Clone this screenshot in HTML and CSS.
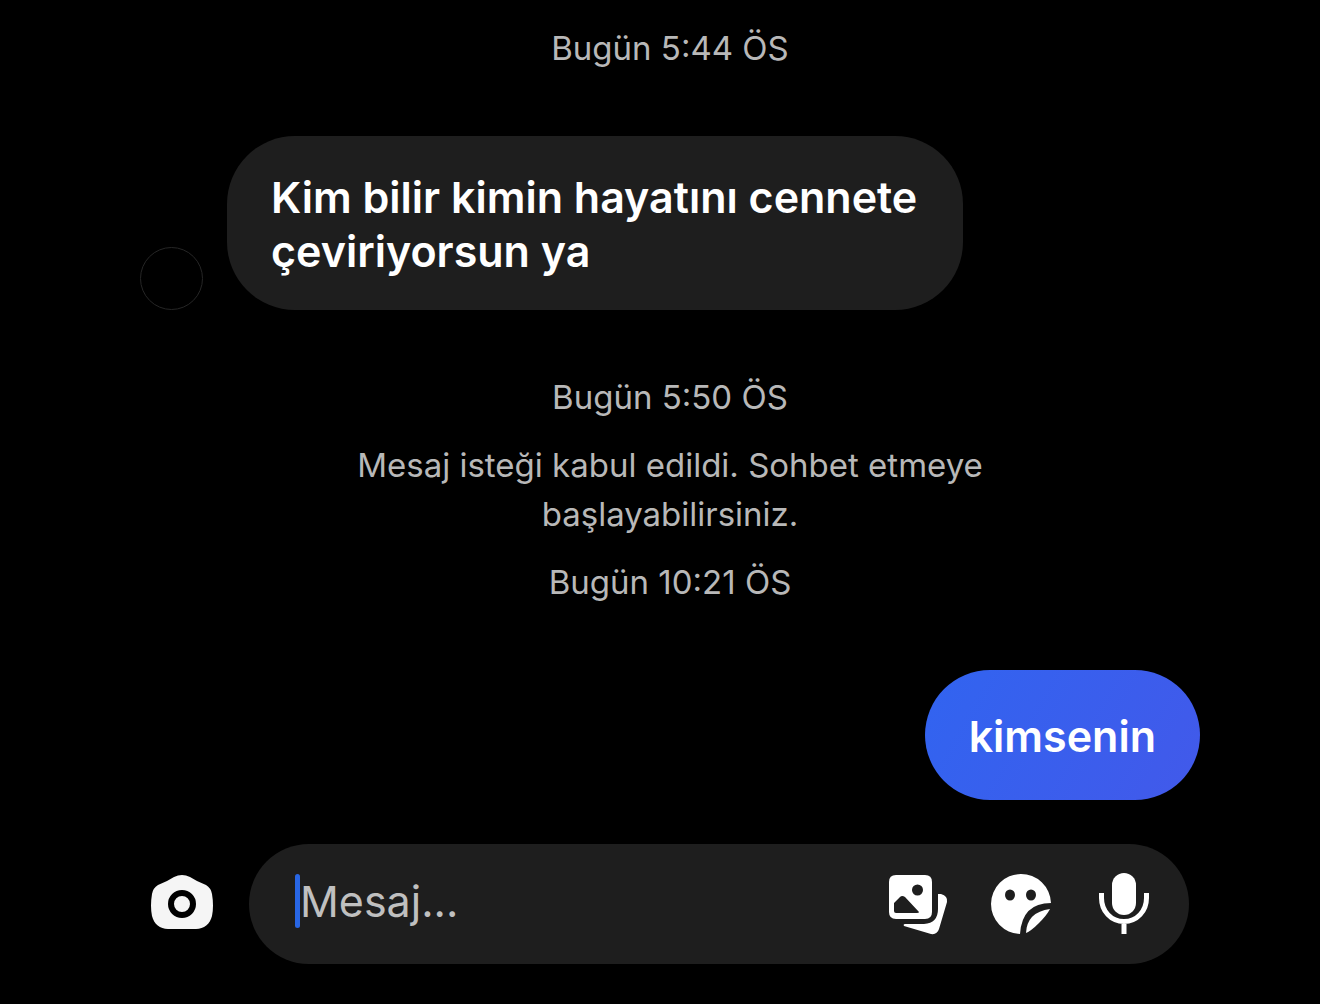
FILE: index.html
```html
<!DOCTYPE html>
<html lang="tr">
<head>
<meta charset="utf-8">
<meta name="viewport" content="width=device-width, initial-scale=1">
<title>Mesajlar</title>
<link rel="stylesheet" href="styles.css">
</head>
<body>
<main class="chat">
  <section class="thread">
    <div class="notices">
      <time class="notice">Bugün 5:44 ÖS</time>
    </div>
    <div class="row">
      <span class="avatar"></span>
      <p class="bubble">Kim bilir kimin hayatını cennete çeviriyorsun ya</p>
    </div>
    <div class="notices">
      <time class="notice">Bugün 5:50 ÖS</time>
      <p class="notice">Mesaj isteği kabul edildi. Sohbet etmeye başlayabilirsiniz.</p>
      <time class="notice">Bugün 10:21 ÖS</time>
    </div>
    <div class="row row-sent">
      <p class="bubble bubble-sent">kimsenin</p>
    </div>
  </section>
  <form class="composer">
    <button class="icon-button" type="button" aria-label="Kamera">
      <svg width="64" height="60" viewBox="0 0 64 60">
        <path fill="#f5f5f5" d="M24 3Q32 -1 40 3L47 7L56 11Q61 14 62 20Q64 32 62 42C60 50 54 55 46 55H18C10 55 4 50 2 42Q0 32 2 20Q3 14 8 11L17 7Z"/>
        <circle cx="32" cy="30" r="11" fill="none" stroke="#000" stroke-width="6"/>
      </svg>
    </button>
    <div class="field">
      <div class="entry">
        <span class="caret"></span>
        <input class="input" type="text" placeholder="Mesaj..." aria-label="Mesaj">
      </div>
      <div class="tools">
        <button class="icon-button" type="button" aria-label="Galeri">
          <svg width="60" height="62" viewBox="0 0 60 62">
            <path fill="#fff" fill-rule="evenodd" d="M8 2H37Q44 2 44 9V39Q44 46 37 46H8Q1 46 1 39V9Q1 2 8 2ZM29.500 11.500A5.500 5.500 0 1 0 29.500 22.500A5.500 5.500 0 1 0 29.500 11.500ZM12 24Q14 22 17 24L31 39Q31 40 29 40H8Q6 40 6 38V30Z"/>
            <path fill="#fff" d="M50 21H53Q60 23 59 29L51 56Q49 62 43 61L16 53Q15 51 17 51H36Q50 50 50 36Z"/>
          </svg>
        </button>
        <button class="icon-button" type="button" aria-label="Çıkartma">
          <svg width="60" height="62" viewBox="0 0 60 62">
            <path fill="#fff" d="M29 61A30 30 0 1 1 60 30Q31 30 29 61Z"/>
            <ellipse cx="19" cy="22" rx="5" ry="5.500" fill="#1e1e1e"/>
            <ellipse cx="40" cy="22" rx="5" ry="5.500" fill="#1e1e1e"/>
            <path fill="#fff" d="M35 60Q36 39 59 36Q56 42 48 50Q40 58 35 60Z"/>
          </svg>
        </button>
        <button class="icon-button" type="button" aria-label="Sesli mesaj">
          <svg width="60" height="62" viewBox="0 0 60 62">
            <rect x="18" y="0" width="24" height="42" rx="12" fill="#fff"/>
            <path fill="none" stroke="#fff" stroke-width="5" d="M7.500 20V25C7.500 38 17 48.500 30 48.500S52.500 38 52.500 25V20M30 48V61"/>
          </svg>
        </button>
      </div>
    </div>
  </form>
</main>
</body>
</html>
```

FILE: styles.css
```css
* {
  box-sizing: border-box;
}

body {
  margin: 0;
  background: #000;
  color: #fff;
  font-family: Inter, "Liberation Sans", sans-serif;
}

p {
  margin: 0;
}

.chat {
  display: flex;
  flex-direction: column;
  gap: 44px;
  min-height: 100vh;
  padding: 24px 120px 40px 140px;
}

.thread {
  display: flex;
  flex-direction: column;
  gap: 63px;
}

.notices {
  display: flex;
  flex-direction: column;
  align-items: center;
  gap: 19px;
}

.notice {
  max-width: 680px;
  color: #b8b8b8;
  font-size: 33px;
  line-height: 49px;
  text-align: center;
}

.row {
  display: flex;
  align-items: flex-end;
  gap: 24px;
}

.row-sent {
  justify-content: flex-end;
}

.avatar {
  flex: none;
  width: 63px;
  height: 63px;
  border: 1px solid #262626;
  border-radius: 50%;
}

.bubble {
  max-width: 736px;
  padding: 34px 44px 32px;
  border-radius: 68px;
  background: #1e1e1e;
  font-size: 43px;
  font-weight: 600;
  line-height: 54px;
}

.bubble-sent {
  padding: 39px 44px 37px;
  background: linear-gradient(120deg, #3164f0, #4259ea);
}

.composer {
  display: flex;
  align-items: center;
  gap: 35px;
  padding: 0 11px 0 10px;
}

.icon-button {
  flex: none;
  padding: 0;
  border: 0;
  background: none;
}

.icon-button svg {
  display: block;
}

.field {
  display: flex;
  flex: 1;
  align-items: center;
  min-width: 0;
  height: 120px;
  padding: 0 35px 0 46px;
  border-radius: 60px;
  background: #1e1e1e;
}

.entry {
  display: flex;
  flex: 1;
  align-items: center;
  min-width: 0;
  padding-bottom: 6px;
}

.caret {
  flex: none;
  width: 5px;
  height: 54px;
  border-radius: 3px;
  background: #2866e4;
}

.input {
  flex: 1;
  min-width: 0;
  height: 60px;
  padding: 0;
  border: 0;
  outline: 0;
  background: none;
  color: #fff;
  font: 400 43px Inter, "Liberation Sans", sans-serif;
}

.input::placeholder {
  color: #c0c0c0;
}

.tools {
  display: flex;
  gap: 43px;
}
```
